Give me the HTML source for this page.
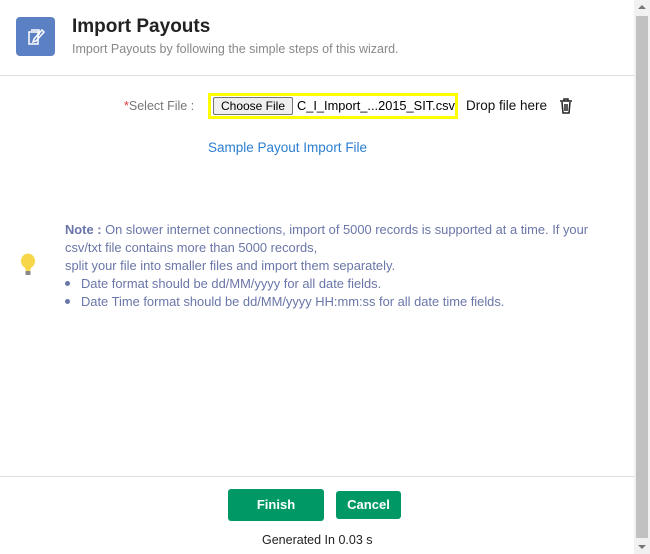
<!DOCTYPE html>
<html><head><style>
*{margin:0;padding:0;box-sizing:border-box}
body{width:650px;height:554px;background:#fff;font-family:"Liberation Sans",sans-serif;position:relative;overflow:hidden}
.abs{position:absolute;white-space:nowrap}
.sb{position:absolute;left:634px;top:0;width:16px;height:554px;background:#f1f1f1}
.thumb{position:absolute;left:636px;top:16px;width:12px;height:522px;background:#c1c1c1}
.note{color:#6a76a8;font-size:12.9px}
</style></head><body>
<div class="abs" style="left:16px;top:17px;width:39px;height:39px;background:#5b80c4;border-radius:4px">
<svg width="39" height="39" viewBox="0 0 39 39"><g fill="none" stroke="#fff" stroke-width="1.5"><rect x="13" y="15" width="9" height="12"/><path d="M15 13h8v5"/><path d="M18 22l8-9 2 2-8 9-3 1z"/></g></svg></div>
<div class="abs" style="left:72px;top:16px;font-size:19px;font-weight:bold;color:#222">Import Payouts</div>
<div class="abs" style="left:72px;top:42px;font-size:12.5px;color:#888">Import Payouts by following the simple steps of this wizard.</div>
<div class="abs" style="left:0;top:75px;width:634px;height:1px;background:#ddd"></div>
<div class="abs" style="left:124px;top:99px;font-size:12.5px;color:#777"><span style="color:#d33">*</span>Select File :</div>
<div class="abs" style="left:208px;top:93px;width:250px;height:26px;border:3px solid #ffff00"></div>
<div class="abs" style="left:213px;top:97px;width:80px;height:18px;background:#efefef;border:1px solid #767676;border-radius:2px;font-size:12px;text-align:center;line-height:16px;color:#000">Choose File</div>
<div class="abs" style="left:297px;top:98px;font-size:12.8px;color:#000">C_I_Import_...2015_SIT.csv</div>
<div class="abs" style="left:466px;top:98px;font-size:13.5px;color:#111">Drop file here</div>
<svg class="abs" style="left:559px;top:98px" width="14" height="16" viewBox="0 0 14 16"><g fill="none" stroke="#222" stroke-width="1.5"><path d="M1 3h12M5 3V1h4v2M3 4l1 11h6l1-11M6 6v7M8 6v7"/></g></svg>
<div class="abs" style="left:208px;top:140px;font-size:13.5px;color:#2b7fd0">Sample Payout Import File</div>
<svg class="abs" style="left:19px;top:253px" width="18" height="24" viewBox="0 0 18 24"><ellipse cx="9" cy="8" rx="7" ry="7.5" fill="#f7d64a"/><path d="M5 12h8l-2 6H7z" fill="#f7d64a"/><rect x="6.5" y="18" width="5" height="4" fill="#888"/></svg>
<div class="abs note" style="left:65px;top:221px;line-height:18px"><b>Note :</b> On slower internet connections, import of 5000 records is supported at a time. If your<br>csv/txt file contains more than 5000 records,<br>split your file into smaller files and import them separately.</div>
<div class="abs note" style="left:65px;top:275px;line-height:18px"><span style="display:inline-block;width:5px;height:5px;border-radius:50%;background:#6a76a8;margin:0 11px 2px 0"></span>Date format should be dd/MM/yyyy for all date fields.<br><span style="display:inline-block;width:5px;height:5px;border-radius:50%;background:#6a76a8;margin:0 11px 2px 0"></span>Date Time format should be dd/MM/yyyy HH:mm:ss for all date time fields.</div>
<div class="abs" style="left:0;top:476px;width:634px;height:1px;background:#ddd"></div>
<div class="abs" style="left:228px;top:489px;width:96px;height:32px;background:#009966;border-radius:3px;color:#fff;font-size:13px;font-weight:bold;text-align:center;line-height:32px">Finish</div>
<div class="abs" style="left:336px;top:491px;width:65px;height:28px;background:#009966;border-radius:3px;color:#fff;font-size:13px;font-weight:bold;text-align:center;line-height:28px">Cancel</div>
<div class="abs" style="left:262px;top:533px;font-size:12.5px;color:#222">Generated In 0.03 s</div>
<div class="sb"></div><div class="thumb"></div>
<div class="abs" style="left:638px;top:5px;width:0;height:0;border-left:4px solid transparent;border-right:4px solid transparent;border-bottom:4px solid #777"></div>
<div class="abs" style="left:638px;top:545px;width:0;height:0;border-left:4px solid transparent;border-right:4px solid transparent;border-top:4px solid #777"></div>
</body></html>
